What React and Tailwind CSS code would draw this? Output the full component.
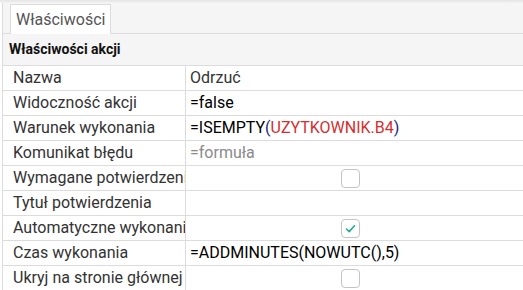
import React from 'react';

const Checkbox = ({ checked }) => (
  <div className="w-[19px] h-[19px] rounded-[4px] border border-[#c4c4c4] bg-white flex items-center justify-center">
    {checked && (
      <svg width="13" height="13" viewBox="0 0 13 13" fill="none">
        <path d="M2.5 7 L5.2 9.6 L10.5 3.8" stroke="#26a69a" strokeWidth="1.6" strokeLinecap="round" strokeLinejoin="round" />
      </svg>
    )}
  </div>
);

const rows = [
  { label: 'Nazwa', value: <span className="text-[#333]">Odrzuć</span> },
  { label: 'Widoczność akcji', value: <span className="text-black">=false</span> },
  {
    label: 'Warunek wykonania',
    value: (
      <span className="text-black">
        =ISEMPTY<span className="text-[#1a237e]">(</span>
        <span className="text-[#d32f2f]">UZYTKOWNIK.B4</span>
        <span className="text-[#1a237e]">)</span>
      </span>
    ),
  },
  { label: 'Komunikat błędu', value: <span className="text-[#8a8a8a]">=formuła</span> },
  { label: 'Wymagane potwierdzenie', check: false },
  { label: 'Tytuł potwierdzenia', value: null },
  { label: 'Automatyczne wykonanie', check: true },
  { label: 'Czas wykonania', value: <span className="text-black">=ADDMINUTES(NOWUTC(),5)</span> },
  { label: 'Ukryj na stronie głównej', check: false },
];

export default function App() {
  return (
    <div className="w-[523px] h-[290px] overflow-hidden bg-white font-['Roboto',sans-serif]">
      <div className="h-[3px] bg-gradient-to-b from-[#e4e4e4] to-[#f3f3f3]" />
      <div className="ml-[2px] border-l border-[#dcdcdc]">
        <div className="h-[31px] bg-[#f5f5f5] border-b border-[#dcdcdc] flex items-end pl-[7px]">
          <div className="h-[30px] bg-white border border-b-0 border-[#dcdcdc] px-[5px] flex items-center text-[16px] text-[#555] -mb-px">
            Właściwości
          </div>
        </div>
        <div className="h-[32px] bg-[#f5f5f5] border-b border-[#dcdcdc] flex items-center pl-[6px] text-[14px] font-bold text-[#111]">
          Właściwości akcji
        </div>
        {rows.map((r) => (
          <div key={r.label} className="h-[25px] border-b border-[#dcdcdc] grid grid-cols-[183px_1fr] text-[16px]">
            <div className="border-r border-[#dcdcdc] pl-[10px] flex items-center whitespace-nowrap overflow-hidden text-[#333]">
              {r.label}
            </div>
            {r.check !== undefined ? (
              <div className="flex items-center pl-[155px]">
                <Checkbox checked={r.check} />
              </div>
            ) : (
              <div className="flex items-center pl-[4px] whitespace-nowrap">{r.value}</div>
            )}
          </div>
        ))}
      </div>
    </div>
  );
}
